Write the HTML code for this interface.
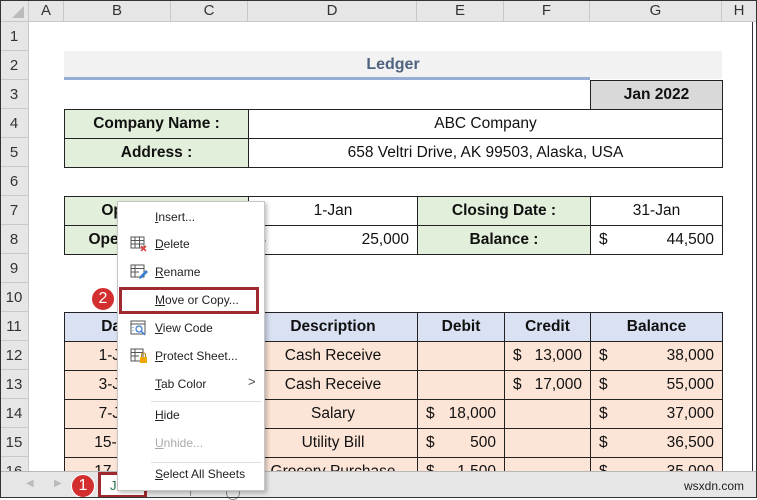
<!DOCTYPE html>
<html><head><meta charset="utf-8"><style>
*{margin:0;padding:0;box-sizing:border-box}
body{width:757px;height:498px;overflow:hidden;background:#fff;font-family:"Liberation Sans",sans-serif;position:relative}
.a{position:absolute}
.h{position:absolute;background:#e6e6e6;border-right:1px solid #c8c8c8;border-bottom:1px solid #c8c8c8;color:#333;font-size:15px;display:flex;align-items:center;justify-content:center}
.c{position:absolute;border:1px solid #222;font-size:15.5px;display:flex;align-items:center;justify-content:center;color:#111;white-space:nowrap;overflow:hidden}
.b{font-weight:bold}
.g{background:#e2efda}.bl{background:#d9e1f2}.p{background:#fce4d6}
.m{display:flex;justify-content:space-between;padding:0 8px 0 8px}
.mi{position:absolute;left:37px;font-size:12px;color:#222}
.mi u{text-decoration:underline}
.badge{position:absolute;width:24px;height:24px;border-radius:50%;background:#d32f2f;color:#fff;font-size:16px;display:flex;align-items:center;justify-content:center;border:1px solid #fff}
</style></head><body>
<div class="h" style="left:0;top:0;width:29px;height:22px"><svg width="12" height="12" style="position:absolute;right:4px;bottom:3px"><polygon points="12,0 12,12 0,12" fill="#bbb"/></svg></div>
<div class="h" style="left:29px;top:0;width:35px;height:22px">A</div>
<div class="h" style="left:64px;top:0;width:107px;height:22px">B</div>
<div class="h" style="left:171px;top:0;width:77px;height:22px">C</div>
<div class="h" style="left:248px;top:0;width:169px;height:22px">D</div>
<div class="h" style="left:417px;top:0;width:87px;height:22px">E</div>
<div class="h" style="left:504px;top:0;width:86px;height:22px">F</div>
<div class="h" style="left:590px;top:0;width:132px;height:22px">G</div>
<div class="h" style="left:722px;top:0;width:35px;height:22px">H</div>
<div class="h" style="left:0;top:22px;width:29px;height:29px">1</div>
<div class="h" style="left:0;top:51px;width:29px;height:29px">2</div>
<div class="h" style="left:0;top:80px;width:29px;height:29px">3</div>
<div class="h" style="left:0;top:109px;width:29px;height:29px">4</div>
<div class="h" style="left:0;top:138px;width:29px;height:29px">5</div>
<div class="h" style="left:0;top:167px;width:29px;height:29px">6</div>
<div class="h" style="left:0;top:196px;width:29px;height:29px">7</div>
<div class="h" style="left:0;top:225px;width:29px;height:29px">8</div>
<div class="h" style="left:0;top:254px;width:29px;height:29px">9</div>
<div class="h" style="left:0;top:283px;width:29px;height:29px">10</div>
<div class="h" style="left:0;top:312px;width:29px;height:29px">11</div>
<div class="h" style="left:0;top:341px;width:29px;height:29px">12</div>
<div class="h" style="left:0;top:370px;width:29px;height:29px">13</div>
<div class="h" style="left:0;top:399px;width:29px;height:29px">14</div>
<div class="h" style="left:0;top:428px;width:29px;height:29px">15</div>
<div class="h" style="left:0;top:457px;width:29px;height:29px">16</div>
<div class="a" style="left:752px;top:22px;width:1px;height:450px;background:#333"></div>

<div class="a b" style="left:64px;top:51px;width:658px;height:28px;background:#f2f2f2;color:#4f6280;font-size:16px;display:flex;align-items:center;justify-content:center">Ledger</div>
<div class="a" style="left:64px;top:77px;width:526px;height:3px;background:#97aed4"></div>
<div class="c b" style="left:590px;top:80px;width:133px;height:30px;background:#d9d9d9">Jan 2022</div>

<div class="c b g" style="left:64px;top:109px;width:185px;height:30px">Company Name :</div>
<div class="c" style="left:248px;top:109px;width:475px;height:30px">ABC Company</div>
<div class="c b g" style="left:64px;top:138px;width:185px;height:30px">Address :</div>
<div class="c" style="left:248px;top:138px;width:475px;height:30px">658 Veltri Drive, AK 99503, Alaska, USA</div>

<div class="c b g" style="left:64px;top:196px;width:185px;height:30px">Opening Date :</div>
<div class="c" style="left:248px;top:196px;width:170px;height:30px">1-Jan</div>
<div class="c b g" style="left:417px;top:196px;width:174px;height:30px">Closing Date :</div>
<div class="c" style="left:590px;top:196px;width:133px;height:30px">31-Jan</div>
<div class="c b g" style="left:64px;top:225px;width:185px;height:30px">Opening Balance :</div>
<div class="c m" style="left:248px;top:225px;width:170px;height:30px"><span>$</span><span>25,000</span></div>
<div class="c b g" style="left:417px;top:225px;width:174px;height:30px">Balance :</div>
<div class="c m" style="left:590px;top:225px;width:133px;height:30px"><span>$</span><span>44,500</span></div>

<div class="c b bl" style="left:64px;top:312px;width:108px;height:30px">Date</div>
<div class="c bl" style="left:171px;top:312px;width:78px;height:30px"></div>
<div class="c b bl" style="left:248px;top:312px;width:170px;height:30px">Description</div>
<div class="c b bl" style="left:417px;top:312px;width:88px;height:30px">Debit</div>
<div class="c b bl" style="left:504px;top:312px;width:87px;height:30px">Credit</div>
<div class="c b bl" style="left:590px;top:312px;width:133px;height:30px">Balance</div>

<div class="c p" style="left:64px;top:341px;width:108px;height:30px">1-Jan</div>
<div class="c p" style="left:171px;top:341px;width:78px;height:30px"></div>
<div class="c p" style="left:248px;top:341px;width:170px;height:30px">Cash Receive</div>
<div class="c p" style="left:417px;top:341px;width:88px;height:30px"></div>
<div class="c p m" style="left:504px;top:341px;width:87px;height:30px"><span>$</span><span>13,000</span></div>
<div class="c p m" style="left:590px;top:341px;width:133px;height:30px"><span>$</span><span>38,000</span></div>

<div class="c p" style="left:64px;top:370px;width:108px;height:30px">3-Jan</div>
<div class="c p" style="left:171px;top:370px;width:78px;height:30px"></div>
<div class="c p" style="left:248px;top:370px;width:170px;height:30px">Cash Receive</div>
<div class="c p" style="left:417px;top:370px;width:88px;height:30px"></div>
<div class="c p m" style="left:504px;top:370px;width:87px;height:30px"><span>$</span><span>17,000</span></div>
<div class="c p m" style="left:590px;top:370px;width:133px;height:30px"><span>$</span><span>55,000</span></div>

<div class="c p" style="left:64px;top:399px;width:108px;height:30px">7-Jan</div>
<div class="c p" style="left:171px;top:399px;width:78px;height:30px"></div>
<div class="c p" style="left:248px;top:399px;width:170px;height:30px">Salary</div>
<div class="c p m" style="left:417px;top:399px;width:88px;height:30px"><span>$</span><span>18,000</span></div>
<div class="c p" style="left:504px;top:399px;width:87px;height:30px"></div>
<div class="c p m" style="left:590px;top:399px;width:133px;height:30px"><span>$</span><span>37,000</span></div>

<div class="c p" style="left:64px;top:428px;width:108px;height:30px">15-Jan</div>
<div class="c p" style="left:171px;top:428px;width:78px;height:30px"></div>
<div class="c p" style="left:248px;top:428px;width:170px;height:30px">Utility Bill</div>
<div class="c p m" style="left:417px;top:428px;width:88px;height:30px"><span>$</span><span>500</span></div>
<div class="c p" style="left:504px;top:428px;width:87px;height:30px"></div>
<div class="c p m" style="left:590px;top:428px;width:133px;height:30px"><span>$</span><span>36,500</span></div>

<div class="c p" style="left:64px;top:457px;width:108px;height:30px">17-Jan</div>
<div class="c p" style="left:171px;top:457px;width:78px;height:30px"></div>
<div class="c p" style="left:248px;top:457px;width:170px;height:30px">Grocery Purchase</div>
<div class="c p m" style="left:417px;top:457px;width:88px;height:30px"><span>$</span><span>1,500</span></div>
<div class="c p" style="left:504px;top:457px;width:87px;height:30px"></div>
<div class="c p m" style="left:590px;top:457px;width:133px;height:30px"><span>$</span><span>35,000</span></div>

<div class="a" style="left:0;top:471px;width:757px;height:27px;background:#e6e6e6;border-top:1px solid #b8b8b8"></div>
<div class="a" style="left:26px;top:478px;color:#bbb;font-size:10px">◀</div>
<div class="a" style="left:54px;top:478px;color:#bbb;font-size:10px">▶</div>
<div class="a" style="left:98px;top:472px;width:49px;height:26px;background:#fff;border:3px solid #9e2a2f"></div>
<div class="a" style="left:110px;top:478px;color:#217346;font-size:13px">J</div>
<div class="a" style="left:190px;top:488px;width:1px;height:8px;background:#888"></div>
<div class="a" style="left:226px;top:486px;width:14px;height:14px;border:1px solid #888;border-radius:50%"></div>
<div class="a" style="left:684px;top:479px;color:#222;font-size:12px">wsxdn.com</div>
<div class="badge" style="left:71px;top:474px">1</div>
<div class="a" style="left:0;top:0;width:757px;height:498px;border:1px solid #333"></div>

<div class="a" style="left:117px;top:201px;width:148px;height:290px;background:#fff;border:1px solid #c6c6c6;box-shadow:2px 2px 4px rgba(0,0,0,.25)">
 <div class="mi" style="top:8px"><u>I</u>nsert...</div>
 <svg class="a" style="left:12px;top:34px" width="18" height="16"><rect x="1" y="1" width="13" height="11" fill="none" stroke="#555"/><path d="M1 4.5H14M1 8H14M5 1V12M9.5 1V12" stroke="#555"/><path d="M11 10l5 5M16 10l-5 5" stroke="#e03030" stroke-width="1.5"/></svg>
 <div class="mi" style="top:35px"><u>D</u>elete</div>
 <svg class="a" style="left:12px;top:62px" width="18" height="16"><rect x="1" y="1" width="13" height="12" fill="none" stroke="#555"/><path d="M1 4.5H14M1 8H9M5 1V13" stroke="#555"/><path d="M9 15l1-3 6-6 2 2-6 6z" fill="#3d7fd1"/></svg>
 <div class="mi" style="top:63px"><u>R</u>ename</div>
 <div class="mi" style="top:91px"><u>M</u>ove or Copy...</div>
 <svg class="a" style="left:12px;top:118px" width="18" height="16"><rect x="1" y="1" width="14" height="13" fill="none" stroke="#555"/><path d="M1 4H15" stroke="#555"/><circle cx="9" cy="9" r="3" fill="none" stroke="#3d7fd1" stroke-width="1.3"/><path d="M11 11l4 4" stroke="#3d7fd1" stroke-width="1.5"/><path d="M3 7v1M3 10v1" stroke="#3d7fd1"/></svg>
 <div class="mi" style="top:119px"><u>V</u>iew Code</div>
 <svg class="a" style="left:12px;top:146px" width="18" height="16"><rect x="1" y="1" width="12" height="12" fill="none" stroke="#555"/><path d="M1 4.5H13M1 8H9M5 1V13" stroke="#555"/><rect x="10" y="9" width="7" height="6" fill="#f0a800"/><path d="M11.5 9V7a2 2 0 0 1 4 0v2" fill="none" stroke="#c08000"/></svg>
 <div class="mi" style="top:147px"><u>P</u>rotect Sheet...</div>
 <div class="mi" style="top:175px"><u>T</u>ab Color</div>
 <div class="a" style="left:130px;top:172px;font-size:13px;color:#444">&gt;</div>
 <div class="a" style="left:33px;top:199px;width:110px;height:1px;background:#ddd"></div>
 <div class="mi" style="top:206px"><u>H</u>ide</div>
 <div class="mi" style="top:234px;color:#aaa"><u>U</u>nhide...</div>
 <div class="a" style="left:33px;top:260px;width:110px;height:1px;background:#ddd"></div>
 <div class="mi" style="top:265px"><u>S</u>elect All Sheets</div>
</div>
<div class="a" style="left:119px;top:287px;width:140px;height:27px;border:3px solid #9e2a2f"></div>
<div class="badge" style="left:91px;top:287px">2</div>
</body></html>
